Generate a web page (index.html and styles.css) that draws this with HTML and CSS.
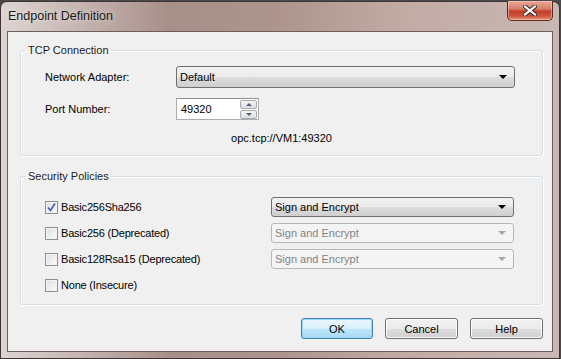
FILE: index.html
```html
<html>
<head>
  <meta http-equiv="Content-Type" content="text/html; charset=utf8">
  <title>Endpoint Definition</title>
  <link rel="stylesheet" href="styles.css">
</head>
<body>
  <div class="window">
    <div class="titlebar">
      <span class="title">Endpoint Definition</span>
      <span class="btn_close">
        <svg width="14" height="11" viewBox="0 0 14 11">
          <path d="M2 1.5 L12 9.5 M12 1.5 L2 9.5" stroke="#3a2a2a" stroke-width="4.2" stroke-linecap="square"/>
          <path d="M2 1.5 L12 9.5 M12 1.5 L2 9.5" stroke="#ffffff" stroke-width="2.2" stroke-linecap="square"/>
        </svg>
      </span>
    </div>
    <div class="client">
      <fieldset class="group group_tcp">
        <legend>TCP Connection</legend>
        <div class="row row_adapter">
          <span class="label">Network Adapter:</span>
          <div class="combo combo_adapter"><span class="combo_text">Default</span><i class="arrow"></i></div>
        </div>
        <div class="row row_port">
          <span class="label">Port Number:</span>
          <div class="spin">
            <span class="spin_text">49320</span>
            <div class="spin_btns">
              <b class="spin_btn"><i class="arrow_up"></i></b>
              <b class="spin_btn"><i class="arrow_down"></i></b>
            </div>
          </div>
        </div>
        <div class="url">opc.tcp://VM1:49320</div>
      </fieldset>

      <fieldset class="group group_security">
        <legend>Security Policies</legend>
        <div class="policy">
          <span class="check checked">
            <svg width="11" height="11" viewBox="0 0 11 11"><path d="M2 5.5 L4.5 8.5 L9 1.5" fill="none" stroke="#3b5bb5" stroke-width="1.6"/></svg>
          </span>
          <span class="check_label">Basic256Sha256</span>
          <div class="combo combo_policy"><span class="combo_text">Sign and Encrypt</span><i class="arrow"></i></div>
        </div>
        <div class="policy">
          <span class="check"></span>
          <span class="check_label">Basic256 (Deprecated)</span>
          <div class="combo combo_policy disabled"><span class="combo_text">Sign and Encrypt</span><i class="arrow"></i></div>
        </div>
        <div class="policy">
          <span class="check"></span>
          <span class="check_label">Basic128Rsa15 (Deprecated)</span>
          <div class="combo combo_policy disabled"><span class="combo_text">Sign and Encrypt</span><i class="arrow"></i></div>
        </div>
        <div class="policy">
          <span class="check"></span>
          <span class="check_label">None (Insecure)</span>
        </div>
      </fieldset>

      <div class="buttons">
        <span class="btn btn_default">OK</span>
        <span class="btn">Cancel</span>
        <span class="btn">Help</span>
      </div>
    </div>
  </div>
</body>
</html>
```

FILE: styles.css
```css
* {
  box-sizing: border-box;
}
body {
  margin: 0;
  background-color: #4a4a4a;
  font-family: "Liberation Sans", Arial, sans-serif;
  font-size: 11px;
  color: #000000;
}
.window {
  width: 560px;
  height: 358px;
  margin-top: 1px;
  border: 1px solid #3e3434;
  border-radius: 7px 7px 0 0;
  background: linear-gradient(to right, #ddd5d3 0%, #c9b9b5 12%, #a8908a 30%, #ad958e 50%, #c3aba5 72%, #c8b7b3 100%);
  display: flex;
  flex-direction: column;
}
.titlebar {
  height: 29px;
  display: flex;
  align-items: flex-start;
  justify-content: space-between;
  padding-left: 7px;
  padding-right: 6px;
}
.title {
  font-size: 12.5px;
  color: #1a1a1a;
  margin-top: 7px;
  text-shadow: 0 0 6px rgba(255, 255, 255, 0.7);
}
.btn_close {
  width: 46px;
  height: 20px;
  margin-top: -1px;
  border: 1px solid #5b2a22;
  border-top: none;
  border-radius: 0 0 5px 5px;
  background: linear-gradient(to bottom, #e8a898 0%, #d8806c 40%, #c3402a 55%, #d0553c 80%, #e39a80 100%);
  box-shadow: inset 0 0 0 1px rgba(255, 210, 200, 0.5);
  display: flex;
  align-items: center;
  justify-content: center;
}
.client {
  margin: 0 6px;
  height: 321px;
  border: 1px solid #6e5e5b;
  background-color: #f0f0f0;
  padding: 0 0 0 12px;
}
.group {
  width: 523px;
  margin: 11px 0 0 0;
  padding: 0 0 10px 0;
  border: 1px solid #d5dfe5;
  border-radius: 3px;
  box-shadow: inset 1px 1px 0 #ffffff, 1px 1px 0 #ffffff;
}
.group legend {
  padding: 0 2px;
  margin-left: 5px;
  font-size: 11px;
  line-height: 14px;
  color: #1a1a1a;
}
.row {
  display: flex;
  align-items: center;
  padding-left: 24px;
}
.row_adapter {
  margin-top: 9px;
}
.row_port {
  margin-top: 10px;
}
.label {
  width: 131px;
}
.combo {
  height: 22px;
  border: 1px solid #707070;
  border-radius: 3px;
  background: linear-gradient(to bottom, #f2f2f2 0%, #ebebeb 50%, #dddddd 51%, #cfcfcf 100%);
  display: flex;
  align-items: center;
  justify-content: space-between;
  padding: 0 7px 0 3px;
}
.combo_adapter {
  width: 339px;
}
.arrow {
  width: 0;
  height: 0;
  border-left: 4px solid transparent;
  border-right: 4px solid transparent;
  border-top: 4px solid #000000;
}
.spin {
  width: 83px;
  height: 22px;
  border: 1px solid #abadb3;
  border-top-color: #8c8f94;
  background-color: #ffffff;
  display: flex;
  align-items: center;
  justify-content: space-between;
  padding: 0 1px 0 4px;
}
.spin_btns {
  display: flex;
  flex-direction: column;
  gap: 1px;
}
.spin_btn {
  width: 17px;
  height: 9px;
  border: 1px solid #a8aaae;
  border-radius: 2px;
  background: linear-gradient(to bottom, #f4f4f4, #dedede);
  display: flex;
  align-items: center;
  justify-content: center;
}
.arrow_up {
  width: 0;
  height: 0;
  border-left: 3px solid transparent;
  border-right: 3px solid transparent;
  border-bottom: 3px solid #4d6185;
}
.arrow_down {
  width: 0;
  height: 0;
  border-left: 3px solid transparent;
  border-right: 3px solid transparent;
  border-top: 3px solid #4d6185;
}
.url {
  margin-top: 11px;
  text-align: center;
  line-height: 14px;
}
.group_security {
  margin-top: 13px;
  padding-bottom: 9px;
}
.policy {
  display: flex;
  align-items: center;
  height: 20px;
  margin-top: 6px;
  padding-left: 24px;
}
.policy:first-of-type {
  margin-top: 14px;
}
.check {
  width: 13px;
  height: 13px;
  border: 1px solid #8e8f8f;
  background: linear-gradient(135deg, #dcdcdc 0%, #f0f0f0 60%, #fbfbfb 100%);
  box-shadow: inset 0 0 0 1px #f4f4f4;
  display: flex;
  align-items: center;
  justify-content: center;
}
.check_label {
  width: 213px;
  padding-left: 3px;
  letter-spacing: -0.2px;
}
.combo_policy {
  width: 243px;
  height: 20px;
}
.combo.disabled {
  border-color: #b7b7b7;
  background: #f4f4f4;
  color: #838383;
}
.combo.disabled .arrow {
  border-top-color: #a6a6a6;
}
.buttons {
  display: flex;
  justify-content: flex-end;
  gap: 12px;
  margin-top: 13px;
  padding-right: 9px;
}
.btn {
  width: 73px;
  height: 21px;
  border: 1px solid #707070;
  border-radius: 3px;
  background: linear-gradient(to bottom, #f2f2f2 0%, #ebebeb 50%, #dddddd 51%, #cfcfcf 100%);
  box-shadow: inset 0 0 0 1px #fcfcfc;
  display: flex;
  align-items: center;
  justify-content: center;
}
.btn_default {
  width: 72px;
  border-color: #3c7fb1;
  background: linear-gradient(to bottom, #eaf6fd 0%, #d9f0fc 50%, #bee6fd 51%, #a7d9f5 100%);
  box-shadow: inset 0 0 0 1px #9ddaf8;
}
```
